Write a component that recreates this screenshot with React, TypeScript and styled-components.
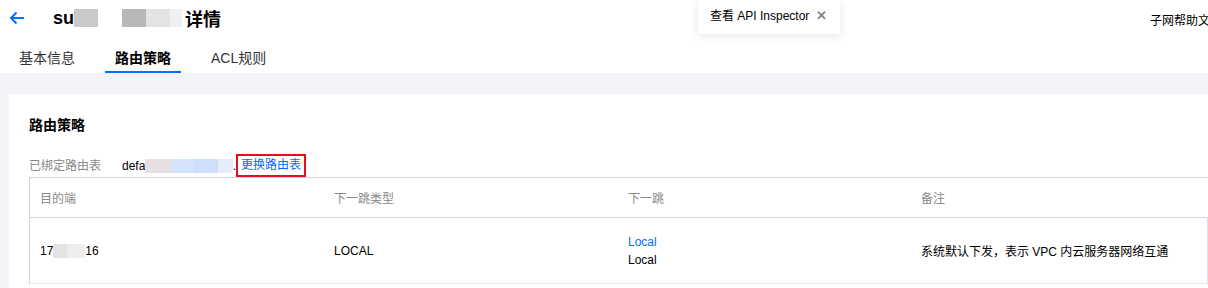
import React from "react";
import styled, { createGlobalStyle } from "styled-components";

const GlobalStyle = createGlobalStyle`
  html, body {
    margin: 0;
    padding: 0;
    background: #f3f4f7;
    font-family: "Liberation Sans", "Noto Sans CJK SC", sans-serif;
    color: #000;
    overflow: hidden;
  }
`;

const Page = styled.div`
  width: 1208px;
  height: 288px;
  position: relative;
  overflow: hidden;
`;

const Header = styled.div`
  background: #fff;
  height: 73px;
  padding: 0 0 0 8px;
  box-sizing: border-box;
  display: flex;
  flex-direction: column;
`;

const TitleRow = styled.div`
  height: 36px;
  display: flex;
  align-items: center;
  position: relative;
`;

const BackButton = styled.span`
  width: 18px;
  height: 18px;
  display: flex;
  align-items: center;
  justify-content: center;
  margin-right: 27px;
`;

const Title = styled.h2`
  margin: 0;
  font-size: 18px;
  font-weight: 700;
  color: #000;
  display: flex;
  align-items: center;
`;

const Mask = styled.span<{ $w: number; $c: string }>`
  display: inline-block;
  width: ${(p) => p.$w}px;
  height: 18px;
  background: ${(p) => p.$c};
`;

const TitleTail = styled.span`
  margin-left: 3px;
`;

const HelpLink = styled.span`
  position: absolute;
  left: 1142px;
  top: 11px;
  font-size: 12px;
  white-space: nowrap;
  color: #000;
`;

const Tabs = styled.div`
  display: flex;
  gap: 20px;
  margin-top: 7px;
  padding-left: 1px;
  height: 30px;
`;

const Tab = styled.div<{ $active?: boolean }>`
  font-size: 14px;
  font-weight: ${(p) => (p.$active ? 700 : 400)};
  color: ${(p) => (p.$active ? "#000" : "#333")};
  padding: 7px 10px 0;
  height: 30px;
  line-height: 16px;
  box-sizing: border-box;
  border-bottom: 2px solid ${(p) => (p.$active ? "#006eff" : "transparent")};
`;

const Inspector = styled.div`
  position: absolute;
  left: 698px;
  top: 0;
  width: 142px;
  height: 34px;
  background: #fff;
  box-shadow: 0 2px 8px rgba(0, 0, 0, 0.1);
  display: flex;
  align-items: center;
  padding-left: 12px;
  box-sizing: border-box;
  font-size: 12px;
  color: #000;
  gap: 7px;
  padding-bottom: 5px;
`;

const Close = styled.span`
  color: #888;
  font-size: 13px;
  font-weight: 700;
  padding-top: 2px;
`;

const Body = styled.div`
  padding: 21px 0 0 9px;
`;

const Card = styled.div`
  background: #fff;
  padding: 22px 0 0 20px;
  height: 200px;
  box-sizing: border-box;
`;

const CardTitle = styled.h3`
  margin: 0;
  font-size: 14px;
  font-weight: 700;
  line-height: 18px;
  color: #000;
`;

const BindRow = styled.div`
  display: flex;
  align-items: flex-end;
  margin-top: 20px;
  height: 23px;
  font-size: 12px;
`;

const BindLabel = styled.span`
  color: #888;
  width: 93px;
  flex-shrink: 0;
  padding-bottom: 4px;
`;

const BindValue = styled.span`
  color: #000;
  display: flex;
  align-items: center;
  width: 114px;
  flex-shrink: 0;
  padding-bottom: 4px;
`;

const SmallMask = styled.span<{ $w: number; $c: string }>`
  display: inline-block;
  width: ${(p) => p.$w}px;
  height: 14px;
  background: ${(p) => p.$c};
`;

const ChangeLink = styled.span`
  color: #006eff;
  border: 2px solid #e1111c;
  padding: 1px 0 2px 3px;
  line-height: 16px;
  width: 70px;
  flex-shrink: 0;
  white-space: nowrap;
  box-sizing: border-box;
  height: 23px;
`;

const Table = styled.div`
  border: 1px solid #cfd5de;
  border-right: none;
  border-bottom: none;
  font-size: 12px;
  width: 1200px;
`;

const Row = styled.div<{ $head?: boolean }>`
  display: grid;
  grid-template-columns: 294px 294px 293px 1fr;
  height: ${(p) => (p.$head ? 39 : 65)}px;
  border-bottom: 1px solid ${(p) => (p.$head ? "#cfd5de" : "#e5e8ee")};
  color: ${(p) => (p.$head ? "#888" : "#000")};
  align-items: center;
`;

const BodyRow = styled(Row)`
  width: 1177px;
  border-right: 1px solid #dde1e8;
`;

const Cell = styled.div`
  padding-left: 10px;
  display: flex;
  flex-direction: column;
  gap: 4px;
`;

const CellLine = styled.span<{ $link?: boolean }>`
  color: ${(p) => (p.$link ? "#006eff" : "#000")};
  display: flex;
  align-items: center;
`;

const ArrowLeft = () => (
  <svg width="16" height="16" viewBox="0 0 16 16" fill="none">
    <path d="M15 8H2M7.5 2.5L2 8l5.5 5.5" stroke="#006eff" strokeWidth="2" />
  </svg>
);

const App: React.FC = () => {
  return (
    <>
      <GlobalStyle />
      <Page>
        <Header>
          <TitleRow>
            <BackButton>
              <ArrowLeft />
            </BackButton>
            <Title>
              su
              <Mask $w={24} $c="#c9c9c9" />
              <Mask $w={24} $c="#ffffff" />
              <Mask $w={24} $c="#b9b8b9" />
              <Mask $w={24} $c="#e3e3e4" />
              <Mask $w={12} $c="#eff0f2" />
              <TitleTail>详情</TitleTail>
            </Title>
            <HelpLink>子网帮助文档</HelpLink>
          </TitleRow>
          <Tabs>
            <Tab>基本信息</Tab>
            <Tab $active>路由策略</Tab>
            <Tab>ACL规则</Tab>
          </Tabs>
        </Header>
        <Inspector>
          查看 API Inspector
          <Close>✕</Close>
        </Inspector>
        <Body>
          <Card>
            <CardTitle>路由策略</CardTitle>
            <BindRow>
              <BindLabel>已绑定路由表</BindLabel>
              <BindValue>
                defa
                <SmallMask $w={26} $c="#e6e0e5" />
                <SmallMask $w={24} $c="#d5e3fb" />
                <SmallMask $w={24} $c="#cfdffb" />
                <SmallMask $w={15} $c="#e6ecfa" />
                .
              </BindValue>
              <ChangeLink>更换路由表</ChangeLink>
            </BindRow>
            <Table>
              <Row $head>
                <Cell>目的端</Cell>
                <Cell>下一跳类型</Cell>
                <Cell>下一跳</Cell>
                <Cell>备注</Cell>
              </Row>
              <BodyRow>
                <Cell>
                  <CellLine>
                    17
                    <SmallMask $w={14} $c="#e4e2e4" />
                    <SmallMask $w={18} $c="#ededee" />
                    16
                  </CellLine>
                </Cell>
                <Cell>LOCAL</Cell>
                <Cell>
                  <CellLine $link>Local</CellLine>
                  <CellLine>Local</CellLine>
                </Cell>
                <Cell>系统默认下发，表示 VPC 内云服务器网络互通</Cell>
              </BodyRow>
            </Table>
          </Card>
        </Body>
      </Page>
    </>
  );
};

export default App;
